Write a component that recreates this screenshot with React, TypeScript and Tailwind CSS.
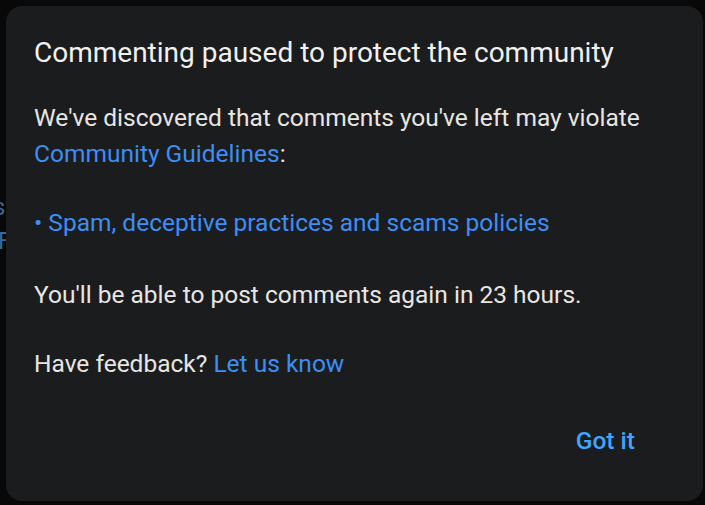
import React from "react";

const App: React.FC = () => {
  return (
    <div
      className="relative w-[705px] h-[505px] overflow-hidden bg-[#080808] pt-[6px] pl-[6px]"
      style={{ fontFamily: "Roboto, 'Liberation Sans', sans-serif" }}
    >
      {/* page content peeking behind the dialog */}
      <div className="absolute left-[-7px] top-[190px] text-[24px] leading-[34px] text-[#346a9f]">s</div>
      <div className="absolute left-[-2px] top-[224px] text-[24px] leading-[34px] text-[#346a9f]">F</div>

      {/* Dialog */}
      <div className="relative w-[697px] h-[495px] rounded-[16px] bg-[#1b1c1e] pl-[28px] pr-[40px] pt-[28px] flex flex-col">
        <h2 className="text-[28px] leading-[38px] text-[#f1f1f1] font-normal whitespace-nowrap">
          Commenting paused to protect the community
        </h2>

        <div className="mt-[28px] text-[24.5px] leading-[35.5px] text-[#e8e6e3]">
          <p>
            We've discovered that comments you've left may violate{" "}
            <span className="text-[#3d8ef5]">Community Guidelines</span>:
          </p>
          <p className="mt-[34px] text-[#3d8ef5]">• Spam, deceptive practices and scams policies</p>
          <p className="mt-[36px]">You'll be able to post comments again in 23 hours.</p>
          <p className="mt-[34px]">
            Have feedback? <span className="text-[#3d8ef5]">Let us know</span>
          </p>
        </div>

        <div className="flex justify-end mt-[45px] pr-[28px]">
          <button className="text-[24.5px] leading-[28px] font-medium text-[#3ea6ff]">Got it</button>
        </div>
      </div>
    </div>
  );
};

export default App;
